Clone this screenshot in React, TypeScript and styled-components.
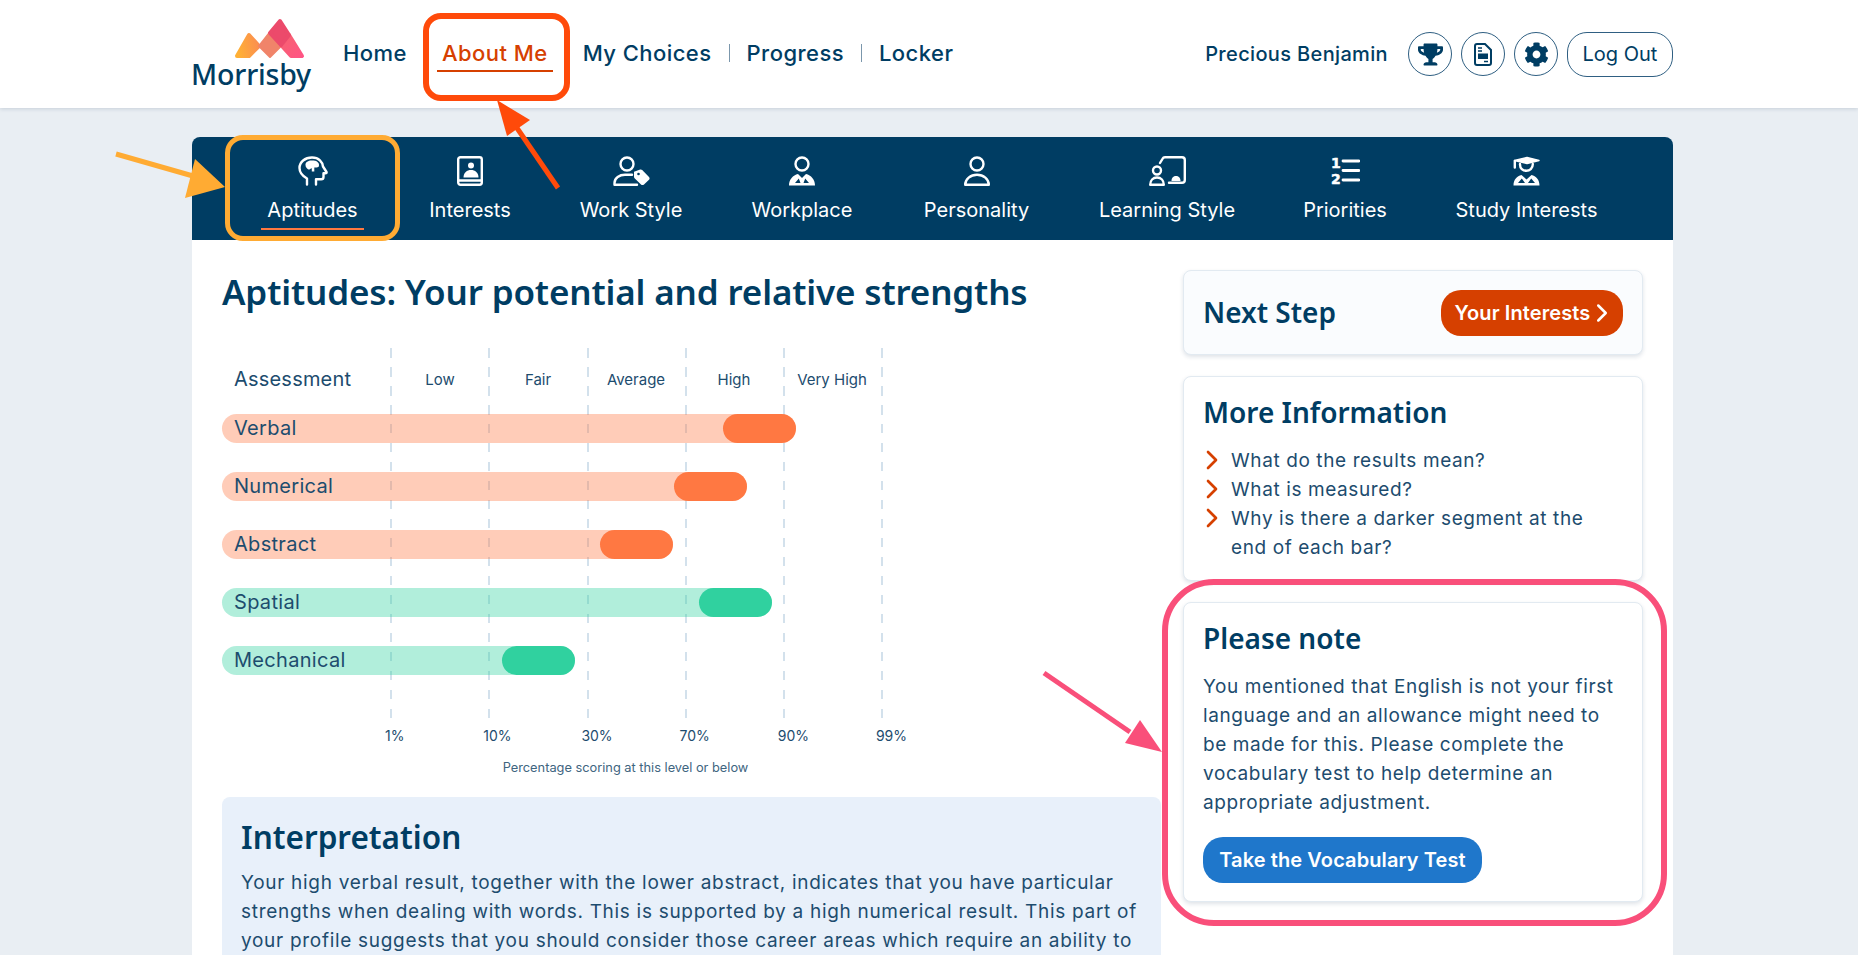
import { FC } from 'react';
import styled, { createGlobalStyle } from 'styled-components';
import { ChevronRight } from 'lucide-react';
import { FaTrophy, FaCog } from 'react-icons/fa';

const Navy = '#003d63';
const Ink = '#1d4c6e';
const Burnt = '#d64000';
const BodyFont = '"Inter", "Liberation Sans", sans-serif';
const HeadFont = '"Noto Sans", "Open Sans", sans-serif';

const GlobalStyle = createGlobalStyle`
    * { box-sizing: border-box; }
    html, body {
        margin: 0;
        height: 100%;
        overflow: hidden;
        background: #e9eef3;
        font-family: ${BodyFont};
        color: ${Ink};
    }
`;

const Page = styled.div`
    position: relative;
    height: 955px;
    overflow: hidden;
`;

const Header = styled.header`
    height: 108px;
    background: #fff;
    box-shadow: 0 1px 4px rgba(20, 50, 80, 0.16);
    padding-left: 192px;
`;

const HeaderInner = styled.div`
    width: 1481px;
    height: 100%;
    display: flex;
    align-items: center;
`;

const Logo = styled.div`
    width: 118px;
    display: flex;
    flex-direction: column;
    align-items: center;
    margin-bottom: 2px;

    svg { margin-left: 38px; display: block; }
`;

const LogoWord = styled.span`
    font-family: ${HeadFont};
    font-weight: 500;
    font-size: 28.5px;
    line-height: 28px;
    letter-spacing: -0.2px;
    color: ${Navy};
`;

const MainNav = styled.nav`
    display: flex;
    align-items: center;
    gap: 17px;
    margin-left: 33px;
    margin-bottom: 2px;
`;

const NavGroup = styled.div`
    display: flex;
    align-items: center;
    gap: 35px;
`;

const NavLink = styled.a<{ $active?: boolean }>`
    position: relative;
    font-size: 22px;
    font-weight: 500;
    line-height: 30px;
    letter-spacing: 0.45px;
    color: ${p => (p.$active ? Burnt : Navy)};

    &::after {
        content: "";
        display: ${p => (p.$active ? 'block' : 'none')};
        position: absolute;
        left: -5px;
        right: -5px;
        bottom: -4px;
        height: 2px;
        background: ${Burnt};
    }
`;

const NavSep = styled.span`
    width: 1px;
    height: 18px;
    background: #7b97ac;
`;

const UserArea = styled.div`
    margin-left: auto;
    display: flex;
    align-items: center;
    gap: 9px;
`;

const UserName = styled.span`
    font-size: 20px;
    font-weight: 500;
    letter-spacing: 0.35px;
    color: ${Navy};
    margin-right: 11px;
`;

const RoundButton = styled.div`
    width: 44px;
    height: 44px;
    border-radius: 50%;
    border: 1px solid #2f5f82;
    display: flex;
    align-items: center;
    justify-content: center;
    color: ${Navy};
`;

const LogOut = styled.div`
    width: 106px;
    height: 45px;
    border-radius: 20px;
    border: 1px solid #2f5f82;
    display: flex;
    align-items: center;
    justify-content: center;
    font-size: 20px;
    color: ${Navy};
`;

const Wrap = styled.div`
    width: 1481px;
    margin: 29px 0 0 192px;
`;

const TabBar = styled.div`
    height: 103px;
    background: ${Navy};
    border-radius: 8px 8px 0 0;
    display: flex;
    gap: 69.5px;
    padding-left: 74px;
`;

const Tab = styled.div<{ $active?: boolean; $width: number }>`
    position: relative;
    width: ${p => p.$width}px;
    display: flex;
    flex-direction: column;
    align-items: center;
    padding-top: 19px;
    color: #fff;
    font-size: 20px;
    white-space: nowrap;

    svg { display: block; height: 30px; }

    &::after {
        content: "";
        display: ${p => (p.$active ? 'block' : 'none')};
        position: absolute;
        left: -5px;
        right: -5px;
        top: 91px;
        height: 2px;
        background: #ff7840;
    }
`;

const TabLabel = styled.span`
    margin-top: 10px;
    line-height: 28px;
`;

const Panel = styled.main`
    background: #fff;
    padding: 30px;
    display: grid;
    grid-template-columns: 939px 460px;
    gap: 22px;
    height: 800px;
`;

const Title = styled.h1`
    margin: 0;
    font-family: ${HeadFont};
    font-size: 35px;
    font-weight: 600;
    line-height: 43px;
    letter-spacing: -0.15px;
    color: ${Navy};
`;

const Chart = styled.section`
    position: relative;
    margin-top: 35px;
    height: 449px;
`;

const ChartLines = styled.div`
    position: absolute;
    left: 168px;
    top: 0;
    height: 375px;
    display: flex;
    gap: 96.3px;
`;

const ChartLine = styled.i`
    display: block;
    width: 2px;
    height: 100%;
    background: repeating-linear-gradient(to bottom, #d3e1ec 0 9.5px, transparent 9.5px 19px);
`;

const ChartHead = styled.div`
    position: relative;
    height: 66px;
    padding-bottom: 4px;
    display: grid;
    grid-template-columns: 169px repeat(5, 98px);
    align-items: center;
    font-size: 15px;
    text-align: center;
`;

const ChartHeadFirst = styled.span`
    font-size: 20px;
    letter-spacing: 0.2px;
    text-align: left;
    padding-left: 12px;
`;

const BarRow = styled.div`
    position: relative;
    height: 29px;
    margin-bottom: 29px;
`;

const BarLabel = styled.span`
    padding-bottom: 1px;
`;

const Bar = styled.div<{ $tone: string }>`
    height: 100%;
    border-radius: 15px;
    display: flex;
    align-items: center;
    justify-content: space-between;
    padding-left: 12px;
    font-size: 20px;
    letter-spacing: 0.3px;
    background: ${p => p.$tone}60;
`;

const BarEnd = styled.div<{ $tone: string }>`
    width: 73px;
    height: 100%;
    border-radius: 15px;
    background: ${p => p.$tone};
`;

const AxisRow = styled.div`
    position: absolute;
    left: 163px;
    top: 380px;
    display: grid;
    grid-template-columns: repeat(6, 98.2px);
    font-size: 14px;
    line-height: 16px;
`;

const AxisCaption = styled.div`
    position: absolute;
    left: 0;
    top: 412px;
    width: 807px;
    text-align: center;
    font-size: 12.8px;
    line-height: 16px;
    color: #40657f;
`;

const Interpretation = styled.section`
    background: #e8f0fa;
    border-radius: 8px 8px 0 0;
    padding: 18px 19px;
    height: 300px;
`;

const SectionTitle = styled.h2`
    margin: 0;
    font-family: ${HeadFont};
    font-size: 31.5px;
    font-weight: 600;
    line-height: 44px;
    color: ${Navy};
`;

const BodyText = styled.p`
    margin: 0;
    font-size: 19px;
    letter-spacing: 0.6px;
    line-height: 29px;
`;

const InterpretationText = styled(BodyText)`
    margin-top: 9px;
    letter-spacing: 0.7px;
`;

const Side = styled.aside`
    display: flex;
    flex-direction: column;
    gap: 21px;
`;

const Card = styled.div`
    background: #fff;
    border: 1px solid #e2eaf1;
    border-radius: 8px;
    box-shadow: 0 2px 4px rgba(30, 60, 90, 0.14);
    padding: 16px 19px 0;
`;

const NextCard = styled(Card)`
    height: 85px;
    padding: 0 19px 0 19px;
    background: #fafcfe;
    display: flex;
    align-items: center;
    justify-content: space-between;

    h3 { padding-bottom: 2px; }
`;

const CardTitle = styled.h3`
    margin: 0;
    font-family: ${HeadFont};
    font-size: 28px;
    font-weight: 600;
    line-height: 38px;
    color: ${Navy};
`;

const PillButton = styled.div<{ $tone: string; $width: number }>`
    width: ${p => p.$width}px;
    height: 46px;
    border-radius: 20px;
    background: ${p => p.$tone};
    color: #fff;
    font-size: 20px;
    font-weight: 600;
    letter-spacing: 0.1px;
    display: flex;
    align-items: center;
    justify-content: center;

    svg { margin: 0 -8px 0 -3px; }
`;

const InfoCard = styled(Card)`
    height: 205px;
`;

const NoteCard = styled(Card)`
    height: 300px;
`;

const InfoList = styled.ul`
    list-style: none;
    margin: 15px 0 0;
    padding: 0 24px 0 0;
    font-size: 19px;
    letter-spacing: 0.6px;
    line-height: 29px;
`;

const InfoItem = styled.li`
    position: relative;
    padding-left: 28px;

    svg {
        position: absolute;
        left: -7px;
        top: -2px;
        color: ${Burnt};
    }
`;

const NoteText = styled(BodyText)`
    margin-top: 15px;
`;

const NoteAction = styled.div`
    margin-top: 20px;
`;

/* annotations drawn over the screenshot */
const Callout = styled.div`
    position: absolute;
    pointer-events: none;
`;

const AboutCallout = styled(Callout)`
    left: 423px;
    top: 13px;
    width: 147px;
    height: 88px;
    border: 6px solid #ff4a0a;
    border-radius: 18px;
`;

const AptitudesCallout = styled(Callout)`
    left: 225px;
    top: 135px;
    width: 175px;
    height: 106px;
    border: 5px solid #ffab33;
    border-radius: 18px;
`;

const NoteCallout = styled(Callout)`
    left: 1162px;
    top: 579px;
    width: 505px;
    height: 347px;
    border: 6px solid #f94f7a;
    border-radius: 52px;
`;

const Arrows = styled.svg`
    position: absolute;
    left: 0;
    top: 0;
    pointer-events: none;
`;

const TabIcon: FC<{ w: number; children: React.ReactNode }> = ({ w, children }) => (
    <svg width={w} height={30} viewBox={`0 0 ${w} 30`} fill="none" stroke="#fff" strokeWidth={2.4} strokeLinecap="round" strokeLinejoin="round">
        {children}
    </svg>
);

const BrainIcon = () => (
    <TabIcon w={30}>
        <path d="M9 28.5V22.5C4.5 20 1.5 16.5 1.5 12C1.5 6 7 1.5 14 1.5C21 1.5 24.5 6 25 10.5L28.5 16C28.8 16.8 28.3 17.3 27.5 17.3H25.5V21C25.5 22.3 24.5 23.3 23.2 23.3H18V28.5" />
        <path fill="#fff" stroke="none" d="M7.5 9C7 5.5 12 3.8 15 4.6C19 4.2 22 7.5 20.8 10.5C19.8 11.8 17.5 11.5 16.3 11.4V15.5H13.8V12.2C12.2 12.5 11.5 14.3 10 13.3C8.8 12.4 7.5 11 7.5 9Z" />
    </TabIcon>
);

const BookIcon = () => (
    <TabIcon w={26}>
        <rect x="1.2" y="1.2" width="23.6" height="27.6" rx="2.2" />
        <path d="M1.2 24.5H24.8" />
        <circle cx="14" cy="9.5" r="3" fill="#fff" stroke="none" />
        <path fill="#fff" stroke="none" d="M6.5 21.5C6.5 16.5 10 14 14 14S21.5 16.5 21.5 21.5Z" />
    </TabIcon>
);

const WorkStyleIcon = () => (
    <TabIcon w={37}>
        <circle cx="14" cy="8" r="6.5" />
        <path d="M1.5 28.8V27C1.5 22 6.5 18.8 12 18.8H19M1.5 28.8H24" />
        <path fill="#fff" stroke="none" d="M21 15.8L27.2 13.5C28 13.3 28.6 13.5 29.2 14L36 21C36.8 21.9 36.8 23 36 23.8L31 28.4C30 29.3 28.8 29.2 28 28.4L21.8 22.5C21.3 22 21 21.4 21 20.8Z" />
        <circle cx="25.5" cy="18" r="1.3" fill={Navy} stroke="none" />
    </TabIcon>
);

const WorkplaceIcon = () => (
    <TabIcon w={26}>
        <circle cx="13" cy="8" r="6.5" />
        <path fill="#fff" stroke="none" d="M0 29.5C0 23.5 4 19 9 18L13 22L17 18C22 19 26 23.5 26 29.5Z" />
        <path fill={Navy} stroke="none" d="M6 27L9.8 22.5L11.5 27ZM20 27L16.2 22.5L14.5 27Z" />
    </TabIcon>
);

const PersonIcon = () => (
    <TabIcon w={26}>
        <circle cx="13" cy="8" r="6.5" />
        <path d="M1.2 28.8C1.2 23 6.5 18.8 13 18.8S24.8 23 24.8 28.8Z" />
    </TabIcon>
);

const LearningIcon = () => (
    <TabIcon w={37}>
        <path d="M11 7L13.5 2.8C14 1.8 15 1.2 16 1.2H33C34.8 1.2 35.8 2.2 35.8 4V24C35.8 25.8 34.8 26.8 33 26.8H20" />
        <circle cx="8" cy="14.5" r="4" />
        <path d="M1.2 28.8C1.2 24.5 4 21.5 8 21.5S14.8 24.5 14.8 28.8Z" />
        <path fill="#fff" stroke="none" d="M22.5 25C22.5 21.5 24.5 20 27 20S31.5 21.5 31.5 25Z" />
    </TabIcon>
);

const NumeralMark = styled.text`
    font-family: "DejaVu Sans", sans-serif;
    font-size: 14px;
    font-weight: 700;
    fill: #fff;
    stroke: #fff;
    stroke-width: 0.5px;
`;

const PrioritiesIcon = () => (
    <TabIcon w={29}>
        <NumeralMark x="0" y="12">1</NumeralMark>
        <NumeralMark x="0" y="28">2</NumeralMark>
        <path d="M12 5H28M12 14.5H28M12 24H28" strokeWidth={2.8} />
    </TabIcon>
);

const StudyIcon = () => (
    <TabIcon w={27}>
        <path fill="#fff" d="M1.5 4.5L14 1.5L26 4.5L14 7.5Z" strokeWidth={1.4} />
        <path d="M1.8 5V11.5M7 8C6.5 17 20 17 19.8 8" />
        <path fill="#fff" stroke="none" d="M0.5 29.5C0.5 23.5 4 20 8.5 19L13.5 23.5L18.5 19C23 20 26.5 23.5 26.5 29.5Z" />
        <path fill={Navy} stroke="none" d="M5 27L8.8 22.5L12 27ZM22 27L18.2 22.5L15 27Z" />
    </TabIcon>
);

const DocIcon = () => (
    <svg width="18" height="23" viewBox="0 0 18 23" fill="none">
        <path d="M1 3C1 1.8 1.8 1 3 1H11L17 7V20C17 21.2 16.2 22 15 22H3C1.8 22 1 21.2 1 20Z" stroke={Navy} strokeWidth="2" />
        <path d="M4 5H8M4 8H8" stroke={Navy} strokeWidth="1.5" />
        <rect x="4" y="10.5" width="10" height="5.5" fill={Navy} />
        <path d="M10 18.5H14" stroke={Navy} strokeWidth="1.5" />
    </svg>
);

const MountainLogo = () => (
    <svg width="72" height="42" viewBox="0 0 72 42">
        <defs>
            <linearGradient id="logoLeft" x1="0" x2="1" y1="0.6" y2="0.4">
                <stop offset="0" stopColor="#ffb035" />
                <stop offset="1" stopColor="#fb8e50" />
            </linearGradient>
            <linearGradient id="logoRight" x1="0" x2="1" y1="0" y2="1">
                <stop offset="0" stopColor="#f6646f" />
                <stop offset="1" stopColor="#ff5484" />
            </linearGradient>
        </defs>
        <g strokeLinejoin="round" strokeWidth="4">
            <path d="M3 38L15 17L25 28L15 38Z" fill="url(#logoLeft)" stroke="url(#logoLeft)" />
            <path d="M25 28L36 14L47 28L36 39Z" fill="#f0846a" stroke="#f0846a" strokeWidth="2" />
            <path d="M47 27L55 17L68 38H57Z" fill="url(#logoRight)" stroke="url(#logoRight)" />
            <path d="M36 15L46 3L55 17L47 27Z" fill="#ec4a6b" stroke="#ec4a6b" />
        </g>
    </svg>
);

const tabs = [
    { label: 'Aptitudes', width: 93, icon: <BrainIcon />, active: true },
    { label: 'Interests', width: 83, icon: <BookIcon /> },
    { label: 'Work Style', width: 100, icon: <WorkStyleIcon /> },
    { label: 'Workplace', width: 103, icon: <WorkplaceIcon /> },
    { label: 'Personality', width: 107, icon: <PersonIcon /> },
    { label: 'Learning Style', width: 135, icon: <LearningIcon /> },
    { label: 'Priorities', width: 82, icon: <PrioritiesIcon /> },
    { label: 'Study Interests', width: 142, icon: <StudyIcon /> },
];

const Orange = '#ff7842';
const Green = '#30d19f';

const bars = [
    { label: 'Verbal', width: 574, tone: Orange },
    { label: 'Numerical', width: 525, tone: Orange },
    { label: 'Abstract', width: 451, tone: Orange },
    { label: 'Spatial', width: 550, tone: Green },
    { label: 'Mechanical', width: 353, tone: Green },
];

const App: FC = () => (
    <Page>
        <GlobalStyle />
        <Header>
            <HeaderInner>
                <Logo>
                    <MountainLogo />
                    <LogoWord>Morrisby</LogoWord>
                </Logo>
                <MainNav>
                    <NavGroup>
                        <NavLink>Home</NavLink>
                        <NavLink $active>About Me</NavLink>
                        <NavLink>My Choices</NavLink>
                    </NavGroup>
                    <NavSep />
                    <NavLink>Progress</NavLink>
                    <NavSep />
                    <NavLink>Locker</NavLink>
                </MainNav>
                <UserArea>
                    <UserName>Precious Benjamin</UserName>
                    <RoundButton><FaTrophy size={25} /></RoundButton>
                    <RoundButton><DocIcon /></RoundButton>
                    <RoundButton><FaCog size={25} /></RoundButton>
                    <LogOut>Log Out</LogOut>
                </UserArea>
            </HeaderInner>
        </Header>
        <Wrap>
            <TabBar>
                {tabs.map(t => (
                    <Tab key={t.label} $active={t.active} $width={t.width}>
                        {t.icon}
                        <TabLabel>{t.label}</TabLabel>
                    </Tab>
                ))}
            </TabBar>
            <Panel>
                <div>
                    <Title>Aptitudes: Your potential and relative strengths</Title>
                    <Chart>
                        <ChartLines>
                            {[0, 1, 2, 3, 4, 5].map(i => <ChartLine key={i} />)}
                        </ChartLines>
                        <ChartHead>
                            <ChartHeadFirst>Assessment</ChartHeadFirst>
                            <span>Low</span>
                            <span>Fair</span>
                            <span>Average</span>
                            <span>High</span>
                            <span>Very High</span>
                        </ChartHead>
                        {bars.map(b => (
                            <BarRow key={b.label}>
                                <Bar $tone={b.tone} style={{ width: b.width }}>
                                    <BarLabel>{b.label}</BarLabel>
                                    <BarEnd $tone={b.tone} />
                                </Bar>
                            </BarRow>
                        ))}
                        <AxisRow>
                            {['1%', '10%', '30%', '70%', '90%', '99%'].map(v => <span key={v}>{v}</span>)}
                        </AxisRow>
                        <AxisCaption>Percentage scoring at this level or below</AxisCaption>
                    </Chart>
                    <Interpretation>
                        <SectionTitle>Interpretation</SectionTitle>
                        <InterpretationText>
                            Your high verbal result, together with the lower abstract, indicates that you have particular
                            strengths when dealing with words. This is supported by a high numerical result. This part of
                            your profile suggests that you should consider those career areas which require an ability to
                        </InterpretationText>
                    </Interpretation>
                </div>
                <Side>
                    <NextCard>
                        <CardTitle>Next Step</CardTitle>
                        <PillButton $tone={Burnt} $width={182}>
                            Your Interests <ChevronRight size={30} strokeWidth={2} />
                        </PillButton>
                    </NextCard>
                    <InfoCard>
                        <CardTitle>More Information</CardTitle>
                        <InfoList>
                            <InfoItem><ChevronRight size={32} strokeWidth={2} />What do the results mean?</InfoItem>
                            <InfoItem><ChevronRight size={32} strokeWidth={2} />What is measured?</InfoItem>
                            <InfoItem><ChevronRight size={32} strokeWidth={2} />Why is there a darker segment at the end of each bar?</InfoItem>
                        </InfoList>
                    </InfoCard>
                    <NoteCard>
                        <CardTitle>Please note</CardTitle>
                        <NoteText>
                            You mentioned that English is not your first language and an allowance might need to
                            be made for this. Please complete the vocabulary test to help determine an appropriate adjustment.
                        </NoteText>
                        <NoteAction>
                            <PillButton $tone="#1f77cb" $width={279}>Take the Vocabulary Test</PillButton>
                        </NoteAction>
                    </NoteCard>
                </Side>
            </Panel>
        </Wrap>
        <AboutCallout />
        <AptitudesCallout />
        <NoteCallout />
        <Arrows width="1858" height="955" viewBox="0 0 1858 955">
            <path d="M558 188L517 128" stroke="#ff4a0a" strokeWidth="5" />
            <path d="M497 100L530 120L507 136Z" fill="#ff4a0a" />
            <path d="M116 154L200 178" stroke="#ffab33" strokeWidth="5" />
            <path d="M225 187L185 198L195 159Z" fill="#ffab33" />
            <path d="M1044 673L1130 732" stroke="#f94f7a" strokeWidth="5" />
            <path d="M1162 752L1125 743L1140 720Z" fill="#f94f7a" />
        </Arrows>
    </Page>
);

export default App;
